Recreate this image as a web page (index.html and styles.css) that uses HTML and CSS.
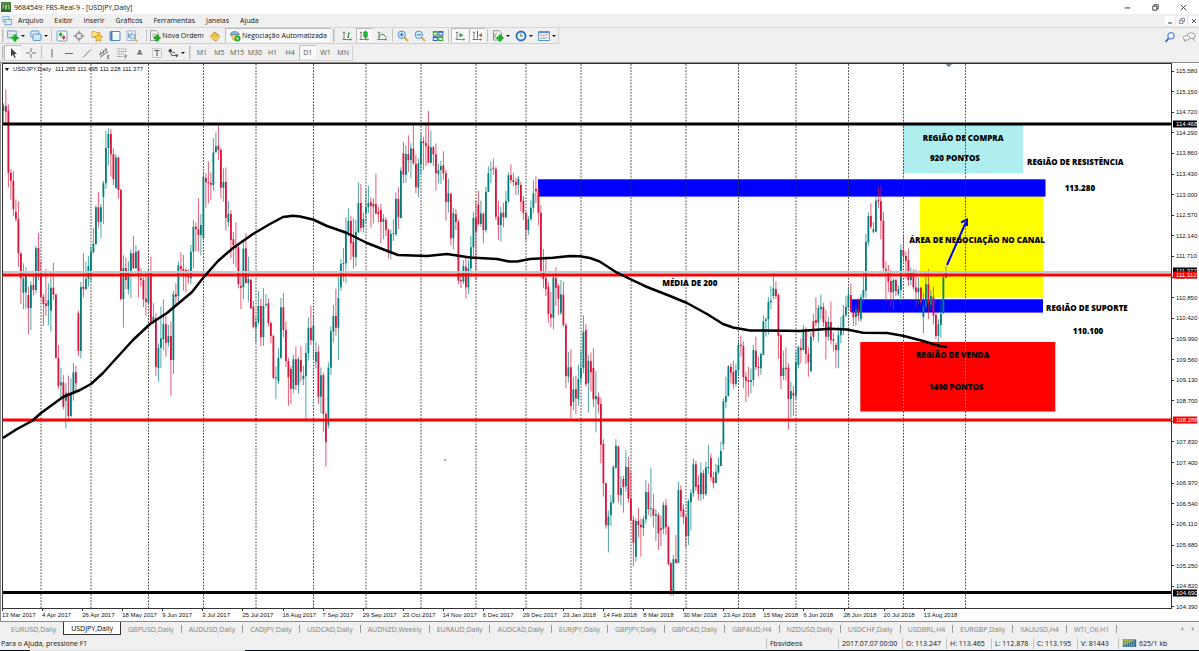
FILE: index.html
```html
<!DOCTYPE html>
<html lang="pt">
<head>
<meta charset="utf-8">
<title>9684549: FBS-Real-9 - [USDJPY,Daily]</title>
<link rel="stylesheet" href="styles.css">
</head>
<body>
<svg width="0" height="0" class="defs" aria-hidden="true">
  <symbol id="plus" viewBox="0 0 7 7"><path d="M2.4 0h2.2v2.4H7v2.2H4.6V7H2.4V4.6H0V2.4h2.4z" fill="#16b81e" stroke="#0b8a13" stroke-width=".5"/></symbol>
  <symbol id="axes" viewBox="0 0 12 12"><path d="M3 2v8M1.500 9.500h9M2 3l1-1.200L4 3M9.300 8.500l1.200 1-1.200 1" fill="none" stroke="#666" stroke-width=".8"/></symbol>
</svg>

<header class="titlebar">
  <svg class="logo" viewBox="0 0 10 10"><rect width="10" height="10" fill="#2c6b25"/><path d="M0 0h10v3H0z" fill="#4b8b3c"/><path d="M2 7V3.500h1.500M2 5h1.300M4.500 3.500V7h1V3.500zM8.500 3.500H7V5h1.500v2H7" fill="none" stroke="#c9e6bf" stroke-width=".7"/></svg>
  <h1>9684549: FBS-Real-9 - [USDJPY,Daily]</h1>
  <div class="winbtns">
    <button aria-label="Minimizar"><svg viewBox="0 0 10 10"><path d="M2 5.500h6" stroke="#222"/></svg></button>
    <button aria-label="Restaurar"><svg viewBox="0 0 10 10"><path d="M2 3.500h4.500V8H2zM3.500 3.500V2H8v4.500H6.500" fill="none" stroke="#222" stroke-width=".9"/></svg></button>
    <button aria-label="Fechar"><svg viewBox="0 0 10 10"><path d="M2 2l6 6M8 2L2 8" stroke="#222" stroke-width=".9"/></svg></button>
  </div>
</header>

<nav class="menubar">
  <svg class="mdi" viewBox="0 0 10 10"><rect x="1" y=".7" width="6" height="5" fill="#e8f2fc" stroke="#6da2dc" stroke-width=".8"/><rect x="3" y="3.500" width="6.300" height="5.300" fill="#f5faff" stroke="#4a8ad2" stroke-width=".8"/><path d="M4.500 7l1-1.500 1 1L8 5" fill="none" stroke="#6da2dc" stroke-width=".6"/></svg>
  <button>Arquivo</button><button>Exibir</button><button>Inserir</button><button>Gráficos</button><button>Ferramentas</button><button>Janelas</button><button>Ajuda</button>
  <div class="mdibtns">
    <button aria-label="Minimizar gráfico"><svg viewBox="0 0 8 8"><path d="M2 6h4" stroke="#4b6078" stroke-width="1.200"/></svg></button>
    <button aria-label="Restaurar gráfico"><svg viewBox="0 0 8 8"><path d="M1.500 3.500h3.500V6.500H1.500zM3 3.500V1.500h3.500V4.500H5" fill="none" stroke="#4b6078" stroke-width=".7"/></svg></button>
    <button aria-label="Fechar gráfico"><svg viewBox="0 0 8 8"><path d="M2 2l4 4M6 2L2 6" stroke="#4b6078"/></svg></button>
  </div>
</nav>

<div class="toolbar">
  <div class="band">
    <i class="grip"></i>
    <div class="tools drops2">
      <button class="drop" aria-label="Novo gráfico"><svg viewBox="0 0 12 12"><rect x=".7" y="1" width="8.500" height="6.800" fill="#eef5fc" stroke="#6b93bd"/><path d="M2 4h5M2 6h4" stroke="#9dbddd" stroke-width=".7"/><use href="#plus" x="4.500" y="4.500" width="7" height="7"/></svg></button>
      <button class="drop" aria-label="Perfis"><svg viewBox="0 0 12 12"><rect x=".8" y="1" width="8" height="6" rx=".8" fill="#e6f1fc" stroke="#5d93cd"/><rect x="3" y="4" width="8" height="6.500" rx=".8" fill="#d5e8fa" stroke="#5d93cd"/></svg></button>
    </div>
    <i class="sep"></i>
    <div class="tools five">
      <button aria-label="Observação do mercado"><svg viewBox="0 0 12 12"><rect x="1" y="1" width="10" height="10" rx="1" fill="#f7fbff" stroke="#6ca0d8"/><path d="M2.300 5l2.300-3L7 5H5.700v1.500H3.600V5z" fill="#22a735"/><path d="M5.300 7l2.400 3L10 7H8.700V5.500H6.600V7z" fill="#e0442a"/></svg></button>
      <button aria-label="Janela de dados"><svg viewBox="0 0 12 12"><circle cx="6" cy="6" r="3.300" fill="none" stroke="#777"/><path d="M6 .5V4.500M6 7.500v4M.5 6h4M7.500 6h4" stroke="#777" stroke-width=".9"/></svg></button>
      <button aria-label="Navegador"><svg viewBox="0 0 12 12"><path d="M1 1.500h3l1 1h4v5H1z" fill="#ffe38a" stroke="#c79a2a" stroke-width=".7"/><path d="M7.500 3.500l1.300 2.600 2.900.4-2.100 2 .5 2.900-2.600-1.400-2.600 1.400.5-2.900-2.100-2 2.900-.4z" fill="#ffd64a" stroke="#b98618" stroke-width=".7"/></svg></button>
      <button aria-label="Terminal"><svg viewBox="0 0 12 12"><rect x="1" y="1.500" width="10" height="9" rx=".8" fill="#fff" stroke="#4a86c9"/><path d="M1.500 2h2v8h-2z" fill="#3d79bd"/><path d="M5 4h5M5 6h5M5 8h5" stroke="#d4e4f5" stroke-width=".6"/></svg></button>
      <button aria-label="Testador"><svg viewBox="0 0 12 12"><rect x="1" y="1" width="8.500" height="9.500" fill="#f1f6fc" stroke="#8ea6c0" stroke-width=".8"/><path d="M2.500 3v5M4 4v3.500M6 2.500V7" stroke="#3f76b5" stroke-width=".7"/><circle cx="6.500" cy="6.500" r="2.500" fill="#cfe6fb" stroke="#5b8fca" stroke-width=".8"/><path d="M8.500 8.500l2.700 2.700" stroke="#d2a32c" stroke-width="1.400"/></svg></button>
    </div>
    <i class="sep wide"></i>
    <button class="labelled order"><svg viewBox="0 0 12 12"><path d="M1.500.7h5.500l2.500 2.500V10.500h-8z" fill="#f7f7f7" stroke="#888" stroke-width=".8"/><path d="M3 4h4M3 6h3" stroke="#999" stroke-width=".7"/><use href="#plus" x="4.500" y="4.500" width="7" height="7"/></svg>Nova Ordem</button>
    <button class="tool" aria-label="MetaEditor"><svg viewBox="0 0 12 12"><path d="M1 7l4.500-5L11 6.500 7 11z" fill="#f2bf3d" stroke="#a9761b" stroke-width=".8"/><path d="M1 7l6 2.500L11 6.500" fill="none" stroke="#fff0b8" stroke-width=".9"/></svg></button>
    <button class="labelled auto on"><svg viewBox="0 0 12 12"><path d="M1 4.500C2 .5 9 .5 10.500 4.500z" fill="#78b7e8" stroke="#3d7db8" stroke-width=".7"/><path d="M2 5h7.500L7 10H4z" fill="#ffd45a" stroke="#c08f20" stroke-width=".6"/><circle cx="8.500" cy="8.500" r="3" fill="#21b02b"/><path d="M7.700 7l2.200 1.500-2.200 1.500z" fill="#fff"/></svg>Negociação Automatizada</button>
    <i class="grip roomy"></i>
    <div class="tools three">
      <button aria-label="Gráfico de barras"><svg viewBox="0 0 12 12"><use href="#axes"/><path d="M7.500 2.500V8M6 7h1.500M7.500 3.500H9" stroke="#25993a" fill="none"/></svg></button>
      <button class="on" aria-label="Candlesticks"><svg viewBox="0 0 12 12"><use href="#axes"/><path d="M7.500.5V9" stroke="#16852a"/><rect x="5.800" y="2" width="3.400" height="5" fill="#1fbf35" stroke="#16852a" stroke-width=".6"/></svg></button>
      <button aria-label="Gráfico de linha"><svg viewBox="0 0 12 12"><use href="#axes"/><path d="M3 7.500C4.500 3 7 3 10.500 7.500" stroke="#25993a" fill="none"/></svg></button>
    </div>
    <i class="sep"></i>
    <div class="tools three">
      <button aria-label="Ampliar"><svg viewBox="0 0 12 12"><path d="M7 7l4 4" stroke="#d9ab31" stroke-width="2"/><circle cx="4.800" cy="4.800" r="3.700" fill="#d9edfc" stroke="#4a8fd2"/><path d="M2.800 4.800h4M4.800 2.800v4" stroke="#2e6db3"/></svg></button>
      <button aria-label="Reduzir"><svg viewBox="0 0 12 12"><path d="M7 7l4 4" stroke="#d9ab31" stroke-width="2"/><circle cx="4.800" cy="4.800" r="3.700" fill="#d9edfc" stroke="#4a8fd2"/><path d="M2.800 4.800h4" stroke="#2e6db3"/></svg></button>
      <button aria-label="Janelas lado a lado"><svg viewBox="0 0 12 12"><path d="M.8 1h5v4.700h-5zM6.300 6.300h5V11h-5z" fill="#35a73a"/><path d="M6.300 1h5v4.700h-5zM.8 6.300h5V11h-5z" fill="#2a5fc4"/><path d="M1.800 2.800h3v2h-3zM7.300 2.800h3v2h-3zM1.800 8h3v2h-3zM7.300 8h3v2h-3z" fill="#e9f4e9"/></svg></button>
    </div>
    <i class="sep roomy"></i>
    <div class="tools two">
      <button class="on" aria-label="Auto rolagem"><svg viewBox="0 0 12 12"><use href="#axes"/><path d="M5.500 3l4 2.300-4 2.300z" fill="#21a334"/></svg></button>
      <button class="on" aria-label="Deslocar gráfico"><svg viewBox="0 0 12 12"><use href="#axes"/><path d="M6.500 1v7.500" stroke="#3773b5"/><path d="M11 3.300v3.800L7.300 5.200z" fill="#d3472b"/></svg></button>
    </div>
    <i class="sep"></i>
    <div class="tools drops3">
      <button class="drop" aria-label="Indicadores"><svg viewBox="0 0 12 12"><path d="M1.500.7h5.500l2.500 2.500V10h-8z" fill="#f7f7f7" stroke="#777" stroke-width=".8"/><path d="M3 8V4.500L5 3" stroke="#666" stroke-width=".8" fill="none"/><use href="#plus" x="4.500" y="4.500" width="7" height="7"/></svg></button>
      <button class="drop" aria-label="Períodos"><svg viewBox="0 0 12 12"><circle cx="6" cy="6" r="4.500" fill="#eef6fd" stroke="#1f6fc2" stroke-width="1.800"/><path d="M5.800 3.500V6.200H8" stroke="#555" fill="none" stroke-width=".9"/></svg></button>
      <button class="drop" aria-label="Modelos"><svg viewBox="0 0 12 12"><rect x=".7" y="1.500" width="10.600" height="9" fill="#f8fbff" stroke="#5d93cd"/><path d="M.7 2.500h10.600" stroke="#5d93cd" stroke-width="1.400"/><path d="M2 6l2-1.300 2 1 3.500-1.500" fill="none" stroke="#c55" stroke-width=".7"/><path d="M2 9l2-1.500 2 1 3.500-1.500" fill="none" stroke="#4a9e55" stroke-width=".8"/></svg></button>
    </div>
  </div>
  <div class="extras">
    <button aria-label="Pesquisar"><svg viewBox="0 0 12 12"><path d="M5 7L1.500 10.800" stroke="#2458c8" stroke-width="1.700"/><circle cx="7" cy="4.700" r="3.100" fill="#f3f8ff" stroke="#5a86dc" stroke-width="1.200"/></svg></button>
    <button class="chat" aria-label="Comunidade"><svg viewBox="0 0 16 12"><ellipse cx="10.500" cy="4.500" rx="4.500" ry="3.300" fill="#f5f5f5" stroke="#888" stroke-width=".9"/><path d="M12 7.500l1.500 2.500.3-3.500" fill="#f5f5f5" stroke="#888" stroke-width=".8"/><ellipse cx="5" cy="7" rx="3.800" ry="2.600" fill="#fafafa" stroke="#888" stroke-width=".9"/><path d="M3 9l-.5 2 2.500-1.500" fill="#fafafa" stroke="#888" stroke-width=".8"/></svg></button>
  </div>
</div>

<div class="toolbar second">
  <div class="band">
    <i class="grip"></i>
    <div class="tools two cursor">
      <button class="on" aria-label="Cursor"><svg viewBox="0 0 12 12"><path d="M4 1v8.500l2-2L7.200 11l1.500-.6L7.300 7h2.700z" fill="#444"/></svg></button>
      <button aria-label="Mira"><svg viewBox="0 0 12 12"><path d="M6 1v4M6 7v4M1 6h4M7 6h4" stroke="#666" stroke-width=".9"/></svg></button>
    </div>
    <i class="sep"></i>
    <div class="tools seven">
      <button aria-label="Linha vertical"><svg viewBox="0 0 12 12"><path d="M6 2v8.500" stroke="#666"/></svg></button>
      <button aria-label="Linha horizontal"><svg viewBox="0 0 12 12"><path d="M2 6.500h8" stroke="#666"/></svg></button>
      <button aria-label="Linha de tendência"><svg viewBox="0 0 12 12"><path d="M2 10.500L10 2.500" stroke="#777"/></svg></button>
      <button aria-label="Canal"><svg viewBox="0 0 12 12"><path d="M1 8l8-6M2 10.500l8-6M2.500 4.500l1 5M5 3l1 5M7.500 1l1 5" stroke="#666" stroke-width=".8"/><path d="M11.500 8.300h-2v3h2M9.500 9.800h1.500" fill="none" stroke="#555" stroke-width=".7"/></svg></button>
      <button aria-label="Fibonacci"><svg viewBox="0 0 12 12"><path d="M1 2h10M1 4.500h10M1 7h7M1 9.500h6" stroke="#888" stroke-width=".8" stroke-dasharray="1.500 .5"/><path d="M11 8.300H9v3.200M9 9.800h1.600" fill="none" stroke="#555" stroke-width=".7"/></svg></button>
      <button class="glyph" aria-label="Texto">A</button>
      <button aria-label="Etiqueta de texto"><svg viewBox="0 0 12 12"><rect x="1.500" y="1.500" width="9" height="9" fill="none" stroke="#888" stroke-width=".7" stroke-dasharray="1 1"/><path d="M3.500 3.500h5M6 3.500V9" stroke="#555" stroke-width="1.100"/></svg></button>
    </div>
    <button class="drop" aria-label="Setas"><svg viewBox="0 0 12 12"><path d="M1 4l2.300-2.500L5.500 4 3.300 5.500zM7.500 7.500h4L9.500 10.500z" fill="#444"/><path d="M3.300 5l1.500 3.500h3M5.500 5.500h2.500" fill="none" stroke="#444" stroke-width=".9"/></svg></button>
    <i class="grip late"></i>
    <div class="tools nine">
      <button>M1</button><button>M5</button><button>M15</button><button>M30</button><button>H1</button><button>H4</button><button class="on">D1</button><button>W1</button><button>MN</button>
    </div>
  </div>
</div>

<main class="chart">
  <div class="plot">
    <svg id="plot" viewBox="3 64 1168 544" preserveAspectRatio="none">
      <rect x="903" y="125" width="120" height="48.500" fill="#afeeee"/>
      <rect x="920" y="196" width="123" height="101.500" fill="#ff0"/>
      <rect x="538" y="179.300" width="507.500" height="17.300" fill="#00f"/>
      <rect x="851" y="299.300" width="192" height="13.300" fill="#00f"/>
      <rect x="860.300" y="342" width="195" height="69.500" fill="red"/>
      <g id="periods"></g>
      <path d="M903.500 342v69.500M965.500 342v69.500" stroke="#e8a890" stroke-width=".8" stroke-dasharray="1.600 1.600"/>
      <g id="wicks"></g>
      <g id="bodies"></g>
      <path d="M3 272h1168" stroke="#c3ccd4" stroke-width="2"/>
      <path d="M3 124h1168M3 592.400h1168" stroke="#000" stroke-width="3"/>
      <path d="M3 275h1168M3 420h1168" stroke="red" stroke-width="3"/>
      <path id="average" fill="none" stroke="#000" stroke-width="2.500" stroke-linejoin="round"/>
      <path d="M947 265L966 222M961 222.500L967 219.500V226" fill="none" stroke="#00f" stroke-width="2"/>
      <path d="M945.500 64h6.500l-3.200 3.200z" fill="#778899"/>
      <rect x="444.500" y="459.500" width="1.300" height="1.300" fill="#444"/>
    </svg>
    <p class="legend"><span class="tri"></span><span>USDJPY,Daily</span> <span>111.265 111.495 111.228 111.377</span></p>
    <p class="note compra">REGIÃO DE COMPRA</p>
    <p class="note compra-pts">920 PONTOS</p>
    <p class="note resist">REGIÃO DE RESISTÊNCIA</p>
    <p class="note resist-px">113.280</p>
    <p class="note canal">ÁREA DE NEGOCIAÇÃO NO CANAL</p>
    <p class="note media">MÉDIA DE 200</p>
    <p class="note suporte">REGIÃO DE SUPORTE</p>
    <p class="note suporte-px">110.100</p>
    <p class="note venda">REGIÃO DE VENDA</p>
    <p class="note venda-pts">1490 PONTOS</p>
  </div>
  <div class="prices" id="prices">
    <span class="tag t1">114.468</span>
    <span class="tag t2">111.377</span>
    <span class="tag hot t3">111.312</span>
    <span class="tag hot t4">108.288</span>
    <span class="tag t5">104.690</span>
  </div>
  <div class="dates" id="dates"></div>
</main>

<div class="tabs" role="tablist">
  <button role="tab">EURUSD,Daily</button><button role="tab" aria-selected="true">USDJPY,Daily</button><button role="tab">GBPUSD,Daily</button><button role="tab">AUDUSD,Daily</button><button role="tab">CADJPY,Daily</button><button role="tab">USDCAD,Daily</button><button role="tab">AUDNZD,Weekly</button><button role="tab">EURAUD,Daily</button><button role="tab">AUDCAD,Daily</button><button role="tab">EURJPY,Daily</button><button role="tab">GBPJPY,Daily</button><button role="tab">GBPCAD,Daily</button><button role="tab">GBPAUD,H4</button><button role="tab">NZDUSD,Daily</button><button role="tab">USDCHF,Daily</button><button role="tab">USDBRL,H4</button><button role="tab">EURGBP,Daily</button><button role="tab">XAUUSD,H4</button><button role="tab">WTI_Oil,H1</button>
  <div class="scroll"><button aria-label="Anterior"><svg viewBox="0 0 6 6"><path d="M4.200 1L1.800 3l2.400 2z" fill="#999"/></svg></button><button aria-label="Próxima"><svg viewBox="0 0 6 6"><path d="M1.800 1l2.400 2-2.400 2z" fill="#999"/></svg></button></div>
</div>

<footer class="status">
  <span>Para o Ajuda, pressione F1</span><span>Fbsvideos</span><span>2017.07.07 00:00</span><span>O: 113.247</span><span>H: 113.465</span><span>L: 112.878</span><span>C: 113.195</span><span>V: 81443</span>
  <span class="net"><svg viewBox="0 0 15 9"><path d="M0 0h15L0 7z" fill="#8a9a2c"/><path d="M0 7L15 0v9H0z" fill="#2f6f8c"/><path d="M2.500 0v9M5 0v9M7.500 0v9M10 0v9M12.500 0v9" stroke="#efefef" stroke-width=".5"/></svg>625/1 kb</span>
</footer>
<div class="edge"><i></i></div>
<script src="chart.js"></script>
</body>
</html>
```

FILE: styles.css
```css
* { box-sizing: border-box; }
html, body { height: 100%; }
body {
  margin: 0;
  display: flex;
  flex-direction: column;
  background: #f0f0f0;
  color: #111;
  font: 7px/9px "Open Sans", "Noto Sans", sans-serif;
  overflow: hidden;
}
h1, p { margin: 0; font: inherit; }
button {
  display: flex;
  align-items: center;
  justify-content: center;
  margin: 0;
  padding: 0;
  border: 0;
  background: none;
  color: inherit;
  font: inherit;
  white-space: nowrap;
}
svg { display: block; flex: none; }
.defs { position: absolute; }

.titlebar { display: flex; align-items: center; height: 14px; padding-left: 1px; background: #fff; }
.titlebar h1 { margin-left: 3px; white-space: nowrap; }
.logo { width: 10px; height: 10px; }
.winbtns { display: flex; margin-left: auto; padding-right: 2px; }
.winbtns button { width: 28px; height: 13px; }
.winbtns svg { width: 9px; height: 9px; }

.menubar { display: flex; align-items: center; gap: 1px; height: 14px; padding-left: 2px; border-bottom: 1px solid #d4d4d4; }
.mdi { width: 10px; height: 10px; }
.menubar > button { padding: 0 5px; }
.mdibtns { display: flex; gap: 3px; margin-left: auto; padding-right: 1px; }
.mdibtns button { width: 9px; height: 9px; background: #fff; }
.mdibtns svg { width: 8px; height: 8px; }

.toolbar { display: flex; justify-content: space-between; height: 17px; }
.band { display: flex; align-items: center; height: 16px; padding-left: 2px; border: solid #cfcfcf; border-width: 0 1px 1px 0; }
.toolbar svg { width: 12px; height: 12px; }
.grip { width: 2px; height: 13px; border-left: 1px solid #bbb; border-right: 1px solid #d8d8d8; }
.sep { width: 1px; height: 13px; margin: 0 1px; background: #c4c4c4; }
.sep.wide { margin: 0 1px 0 5px; }
.roomy { margin-right: 3px; }
.sep.roomy { margin-right: 2px; }
.tools { display: grid; grid-auto-flow: column; grid-auto-columns: 1fr; height: 15px; }
.five { width: 88px; }
.three { width: 53px; }
.two { width: 35px; }
.seven { width: 123px; }
.nine { width: 159px; color: #555; }
.drops2 { width: 46px; }
.drops3 { width: 69px; }
.on { background: #fafafa; border: 1px solid #c8c8c8; border-color: #bbb #eee #eee #bbb; }
.tool { width: 20px; }
.drop { gap: 2px; padding-left: 1px; }
.drop::after { content: ""; border: 2px solid transparent; border-top-color: #111; border-bottom: 0; }
.labelled { gap: 1px; height: 15px; }
.order { width: 57px; }
.auto { width: 106px; margin-right: 2px; }
.glyph { color: #555; font-weight: 700; }
.cursor { width: 36px; }
.late { margin: 0 2px 0 4px; }
.extras { display: flex; align-items: center; gap: 6px; padding-right: 3px; }
.extras .chat svg { width: 14px; }

.chart {
  flex: 1;
  min-height: 0;
  display: grid;
  grid-template: minmax(0, 1fr) 12px / minmax(0, 1fr) 27px;
  padding-left: 1px;
  border: solid #8a8a8a;
  border-width: 1px 0 1px 1px;
  background: #fff;
  font: 6px/8px "Liberation Sans", Arial, sans-serif;
}
.plot { position: relative; border: 1px solid #333; }
.plot > svg { position: absolute; inset: 0; width: 100%; height: 100%; }
.legend { position: relative; display: flex; align-items: center; gap: 4px; padding: 1px 0 0 2px; }
.tri { border: 2px solid transparent; border-top: 3px solid #000; border-bottom: 0; }
.note {
  position: absolute;
  transform: translate(-50%, -50%);
  color: #000;
  font: 800 8px/10px "Open Sans", sans-serif;
  white-space: nowrap;
}
.compra { left: 82.200%; top: 13.600%; }
.compra-pts { left: 81.500%; top: 17.300%; }
.resist { left: 91.800%; top: 18.100%; }
.resist-px { left: 92.200%; top: 22.800%; }
.canal { left: 83.400%; top: 32.400%; }
.media { left: 58.800%; top: 40.200%; }
.suporte { left: 92.800%; top: 44.900%; }
.suporte-px { left: 92.900%; top: 49%; }
.venda { left: 81.300%; top: 53.500%; }
.venda-pts { left: 81.600%; top: 59.400%; }

.prices { position: relative; display: flex; flex-direction: column; justify-content: space-between; margin: 4px 0 -2px; }
.price { display: flex; align-items: center; gap: 2px; }
.price::before { content: ""; width: 2px; height: 1px; background: #333; }
.tag { position: absolute; left: 1px; right: 2px; padding-left: 3px; line-height: 7px; background: #000; color: #fff; transform: translateY(-50%); }
.tag.hot { background: red; }
.t1 { top: 10.500%; }
.t2 { top: 37.500%; }
.t3 { top: 38.200%; }
.t4 { top: 64.900%; }
.t5 { top: 96.600%; }
.dates { display: grid; grid-template-columns: repeat(24, 1fr); width: 82.200%; }
.date { position: relative; padding-top: 2px; white-space: nowrap; }
.date::before { content: ""; position: absolute; left: 0; top: 0; width: 1px; height: 2px; background: #333; }

.tabs { display: flex; align-items: center; height: 14px; padding-left: 4px; color: #808080; }
.tabs > button { height: 8px; padding: 0 7px; border-right: 1px solid #999; }
.tabs > button[aria-selected] { height: 13px; align-self: flex-start; background: #fff; border: 1px solid #333; border-top: 0; color: #000; }
.tabs > button:first-child { border-right: 0; }
.scroll { display: flex; gap: 5px; margin-left: auto; padding-right: 3px; }
.scroll svg { width: 6px; height: 6px; }

.status {
  display: grid;
  grid-template-columns: minmax(0, 1fr) 72px 64px 44px 45px 42px 44px 41px 81px;
  align-items: center;
  height: 14px;
  padding-left: 1px;
}
.status span { white-space: nowrap; }
.status span + span { height: 11px; padding: 1px 0 0 3px; border-left: 1px solid #c4c4c4; }
.status .net { display: flex; gap: 2px; }
.net svg { width: 15px; height: 8px; }
.edge { height: 1px; padding-left: 30px; background: #0b0f18; }
.edge i { display: block; width: 215px; height: 1px; background: #ddd; }
```

FILE: chart.js
```js
// Bars as "direction high top bottom low", heights in thirds of a pixel below a base line.
const FIRST = `g130,138,153,190 r88,138,155,188 r133,153,338,382 r327,338,362,420 r333,362,448,468 r418,456,477,485 r424,477,580,620 r577,580,655,732
g610,655,698,748 g622,645,697,748 r680,705,744,822 g664,676,744,810 r643,675,690,706 g557,565,690,700 r519,564,638,660 r604,638,710,715
r702,710,732,798 r627,730,738,768 g670,720,737,795 g640,683,752,815 r609,683,704,720 r700,704,894,896 r855,894,978,988 g924,967,976,1012
r945,967,1040,1048 g970,998,1022,1106 r947,998,1068,1078 g955,1000,1068,1072 g909,937,1000,1022 r917,937,970,995 r752,760,873,888 g665,681,873,896
r579,680,687,712 g605,656,687,690 g588,619,656,680 g560,575,650,665 g503,551,577,580 g436,442,552,556 r396,442,485,503 g432,442,485,535
g362,370,411,492 g212,264,370,387 g205,222,264,317 r207,222,283,350 r265,283,357,375 g282,292,383,387 r289,293,390,416 r387,390,717,722
g586,624,717,803 r592,624,660,688 g603,632,688,703 g568,580,634,714 r528,580,624,627 g555,575,625,627 r570,573,650,713 r625,655,660,680
r652,660,718,742 r640,716,726,768 g625,650,728,735 r590,640,785,792 g730,770,782,792 r760,775,920,948 g850,863,925,965 g740,835,863,925
g718,792,838,870 r768,793,848,890 g795,828,848,861 r785,828,900,1008 g692,703,900,942 r670,703,710,740 g605,616,708,735 r577,618,628,640
r585,628,640,692 r625,630,640,698 r628,642,652,670 g555,575,655,672 g480,500,575,625 r487,500,508,573 r414,508,525,575 g462,495,525,587
g335,352,533,540 r340,354,367,443 r305,366,370,430 r337,368,374,420 g234,277,376,392 g217,259,276,280 r190,257,270,300 r264,270,383,415
g325,366,383,425 r322,366,474,512 g423,462,486,500 r450,462,540,594 r516,538,556,612 r487,556,565,622 r552,562,672,685 r650,677,683,747
g540,566,682,717 r519,565,668,672 g590,658,670,725 r655,660,745,748 r722,740,800,805 g770,785,802,848 g693,738,787,795 r715,738,832,858
g684,738,832,858 g702,732,735,740 r715,730,790,800 r785,789,828,850 r824,828,953,958 g920,952,954,1018 g865,893,963,972 g714,742,893,897
r699,742,810,832 r785,810,903,921 r893,903,952,1037 r918,927,986,1032 g885,898,987,1000 r860,898,975,990 g890,898,975,1002 r858,900,935,965
g918,947,957,975 g849,879,948,1080 g772,803,880,902 r738,803,840,855 g765,798,843,900 g845,876,905,925 r857,875,1010,1032 g922,946,1010,1060
r938,946,1062,1115 r1055,1062,1147,1220 g907,923,1095,1105 g799,814,923,945 g735,768,815,848 r686,768,803,827 g650,714,803,900 g597,612,682,692
g564,609,612,665 g472,515,610,670 g445,482,515,530 r468,483,550,600 r475,545,590,626 g480,515,592,620 g367,429,517,519 r372,429,503,515
g457,477,503,518 g388,442,458,488 g377,428,442,460 r412,427,438,503 r415,432,440,490 r341,432,460,464 r440,455,463,488 r430,450,486,550
g462,477,486,538 r472,480,510,528 r505,510,577,595 g508,522,580,598 g478,520,523,543 g397,416,523,528 r382,416,472,507 g322,332,474,476
r246,280,344,370 g256,282,344,369 r226,282,300,336 g250,265,300,356 r196,266,310,314 r285,312,382,400 g295,310,383,412 g220,244,312,345
r230,244,250,330 r195,250,258,318 r153,258,308,310 g212,262,308,310 r258,262,283,318 r250,283,340,392 g312,330,342,370 g302,318,330,372
r274,316,340,360 r330,340,426,482 g356,400,426,458 r398,402,535,556 g445,460,535,568 r448,462,486,510 r478,486,662,672 r637,660,664,684
g600,618,665,672 r592,620,682,716 g600,625,682,702 g528,562,625,645 g456,473,562,590 r423,473,515,660 r392,434,493,497 g422,460,492,500
r456,462,510,550 g380,395,510,518 g319,340,396,396 g305,328,330,370 r296,323,327,345 r320,326,470,480 r422,470,495,540 g440,458,495,545
r428,458,472,502 g393,423,472,475 g337,346,424,428 r313,346,361,370 r338,360,366,378 r353,366,375,405 g348,356,375,405 r365,375,425,455
r408,423,460,480 r455,460,510,542 g468,478,510,525 g421,443,478,482 g360,400,443,460 r349,386,394,430 r380,394,458,495 r435,458,632,653
r567,632,657,685 r590,655,687,708 r667,680,762,788 r695,762,773,802 g645,652,773,808 r622,655,683,738 r672,678,716,765 g660,703,758,765
r665,705,796,800 r788,796,948,985 g876,922,950,968 r868,922,1038,1075 g950,988,1025,1050 r947,988,1015,1063 g914,957,1018,1037`;
const SECOND = `g332,384,415,430 g226,275,385,400 r252,270,433,440 g345,362,430,518 r338,364,397,455 r325,384,478,500 g393,468,478,577 r457,470,493,520
r473,492,614,670 r598,612,730,770 r727,730,856,866 g812,830,856,937 g765,787,826,858 g675,680,788,792 g597,617,683,686 r617,619,765,787
g708,744,766,797 r707,717,741,818 g630,680,739,756 r650,681,776,788 r695,776,840,843 r827,840,908,980 g835,843,950,965 r803,843,856,892
r835,854,862,950 g827,838,864,888 g720,756,838,850 r730,757,808,826 g684,804,806,832 r762,806,827,862 g808,822,827,903 r818,825,880,930
r827,865,870,918 g785,795,866,882 r777,796,862,885 r858,862,972,977 r967,970,1062,1067 g945,958,1062,1067 r885,958,968,972 g726,750,968,970
r736,750,812,832 r793,808,832,852 r825,832,888,922 g778,784,888,915 g748,760,787,872 g656,673,760,770 r662,673,740,752 r706,735,762,782
g668,698,763,782 r690,700,762,777 g664,682,762,768 g615,680,684,700 r640,654,712,724 r695,712,730,745 g672,695,729,730 g652,675,697,702
g604,633,678,678 g475,484,613,630 g410,468,486,505 g375,379,468,470 r370,380,398,430 r362,396,432,447 g372,390,432,440 g304,314,390,405
r286,314,318,350 r304,318,411,445 r395,410,422,487 r380,420,426,470 g385,420,426,460 g315,330,420,438 r290,332,381,390 r350,380,384,410
g338,342,385,405 g226,244,344,346 g232,238,243,290 g172,186,238,283 g138,182,187,208 g92,145,168,178 r124,147,168,177 r160,165,288,357
r282,286,408,447 g332,383,408,420 r322,383,388,422 r370,383,477,568 g425,453,477,533 r438,458,467,528 g333,367,467,478 g318,322,375,385
r295,323,330,370 g254,268,330,332 r262,268,342,372 r322,342,367,410 g278,290,393,397 r222,243,290,302 r172,240,248,258 g195,203,248,308`;
const THIRD = `g703,740,748,778 r729,741,787,800 r750,785,830,898 g770,785,830,842 r725,786,840,853 r818,838,842,875 r848,855,870,925 g800,826,870,925
g770,803,826,850 g735,766,803,825 g708,740,766,772 g682,706,743,745 r670,705,755,757 r740,755,772,798 g735,748,772,797 r715,748,768,783
g702,712,778,785 g638,690,712,730 g522,545,692,715 g457,468,547,557 r430,468,500,507 g486,508,515,520 g412,422,515,517 r380,420,424,445
r377,424,482,538 r455,482,625,640 r605,627,632,725 r615,635,665,697 r630,663,697,740 g654,660,697,752 r655,660,693,708 g676,688,702,708
g553,569,690,733 r527,570,588,605 r575,588,602,657 r565,600,660,678 g622,634,660,675 r628,635,682,690 r628,682,697,740 g652,683,697,733
r680,683,727,735 g700,738,772,820 g640,673,740,745 r628,673,730,777 g690,708,735,752 r680,710,767,793 r758,765,828,838 g778,793,828,862
g717,762,795,833 g645,652,760,762 g618,636,653,655`;

const NS = 'http://www.w3.org/2000/svg';
const byId = id => document.getElementById(id);
function addPath(parent, d, attrs) {
  const p = document.createElementNS(NS, 'path');
  p.setAttribute('d', d);
  for (const k in attrs) p.setAttribute(k, attrs[k]);
  parent.appendChild(p);
}

const colours = { g: '#008080', r: '#dc143c' };
const wicks = { g: '', r: '' };
const bodies = { g: '', r: '' };
let index = 0;
for (const [base, text] of [[60, FIRST], [240, SECOND], [60, THIRD]]) {
  for (const bar of text.split(/\s+/)) {
    const dir = bar[0];
    const [high, top, bottom, low] = bar.slice(1).split(',').map(v => base + v / 3);
    const x = 3.4 + index * 2.5;
    wicks[dir] += `M${x} ${high}V${low}`;
    bodies[dir] += `M${x} ${top}V${Math.max(bottom, top + 1)}`;
    index++;
  }
}
for (const dir of ['g', 'r']) {
  addPath(byId('wicks'), wicks[dir], { stroke: colours[dir], 'stroke-width': 0.7 });
  addPath(byId('bodies'), bodies[dir], { stroke: colours[dir], 'stroke-width': 1.8 });
}

const periods = [41, 91, 148.5, 203.5, 256, 313.5, 366, 421, 476, 526, 581, 631, 686, 738.5, 796, 848.5, 903.5, 965.5];
addPath(byId('periods'), periods.map(x => `M${x} 64V608`).join(''), { stroke: '#333', 'stroke-width': 0.9, 'stroke-dasharray': '1.7 1.4' });

const average = [[3, 438], [17, 429], [32, 421], [41, 413], [63, 397], [80, 390], [91, 384], [103, 373], [112, 363], [133, 340], [150, 324], [167, 313], [192, 292], [203, 278], [218, 261], [233, 248], [253, 234], [270, 224], [283, 217], [293, 215.7], [300, 216.5], [313, 219.5], [327, 226], [347, 233], [367, 243], [390, 252], [398, 255], [427, 256], [447, 254], [470, 257.5], [497, 259], [509, 261.5], [517, 261.5], [530, 259], [553, 257.7], [570, 256], [580, 256.3], [590, 258], [600, 261.7], [617, 272.7], [630, 279], [647, 287], [670, 296], [687, 303], [707, 314], [723, 324], [733, 327.5], [750, 330.5], [787, 330.7], [800, 331], [830, 328.7], [847, 329.5], [863, 332.7], [887, 333], [903, 335.7], [923, 341], [940, 346], [947, 347]];
byId('average').setAttribute('d', 'M' + average.map(p => p.join(' ')).join('L'));

for (let i = 0; i < 27; i++) {
  const span = document.createElement('span');
  span.className = 'price';
  const rounding = i >= 17 ? 0.01 : 0;
  span.textContent = (115.58 - i * 0.43 - rounding).toFixed(3);
  byId('prices').insertBefore(span, byId('prices').querySelector('.tag'));
}

const dates = '13 Mar 2017|4 Apr 2017|26 Apr 2017|18 May 2017|9 Jun 2017|3 Jul 2017|25 Jul 2017|16 Aug 2017|7 Sep 2017|29 Sep 2017|23 Oct 2017|14 Nov 2017|6 Dec 2017|29 Dec 2017|23 Jan 2018|14 Feb 2018|8 Mar 2018|30 Mar 2018|23 Apr 2018|15 May 2018|6 Jun 2018|28 Jun 2018|20 Jul 2018|13 Aug 2018';
for (const text of dates.split('|')) {
  const span = document.createElement('span');
  span.className = 'date';
  span.textContent = text;
  byId('dates').appendChild(span);
}
```
